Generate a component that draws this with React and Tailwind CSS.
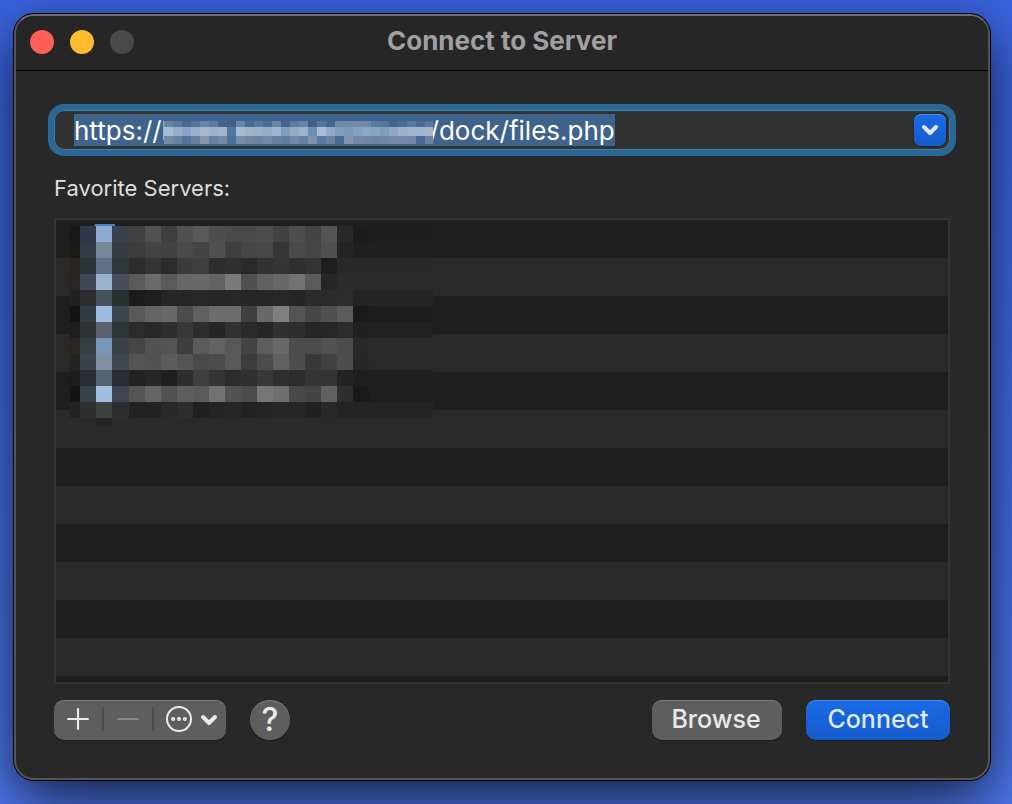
import { ChevronDown, Ellipsis, Minus, Plus } from 'lucide-react'

const CELL = 16

// greyscale levels, one row per strip of the redacted list, starting at the text column
const LIST_GREYS = [
  '42 52 3e 50 58 4e 4a 4a 4c 42 4e 44 54 28 1b 1d',
  '3c 44 42 4a 44 50 3e 46 48 36 4a 46 50 24 1e 1f',
  '2c 34 2b 3b 3e 2d 2f 29 32 34 2f 33 1e 28 28 28',
  '5a 6a 5a 68 68 62 7a 50 60 68 72 5a 26 2a 2a 2a',
  '1b 1e 26 26 28 26 27 26 26 28 25 2a 2a 2b 24 24',
  '58 64 68 4c 60 6c 6c 40 68 80 54 46 50 5c 1a 1d',
  '2b 28 2e 38 2d 25 31 2a 26 30 2e 26 27 2c 20 22',
  '46 52 54 3d 5a 62 58 44 5e 68 4c 4c 52 4c 27 2a',
  '54 52 5c 54 4a 4c 58 3c 4c 60 4e 38 42 4c 26 29',
  '22 26 1f 2e 3e 34 2c 2f 38 2f 2c 34 34 23 1f 1f',
  '54 64 52 5e 5a 72 52 4c 76 6e 48 44 60 2e 1a 1e',
  '22 22 28 2d 20 24 26 22 24 26 26 21 28 24 24 24',
  '2a 2a 2a 29 2a 2a 29 2a 2a 2a 2a 2a 29 2a 2a 2a',
].map((row) => row.split(' ').map((v) => `#${v}${v}${v}`))

// edge, icon left, icon, icon right
const LIST_ICONS = [
  ['#1a1816', '#30374a', '#8daad0', '#384150'],
  ['#1c1a17', '#353a46', '#768797', '#363d41'],
  ['#282522', '#2d3338', '#5d7088', '#30373b'],
  ['#292624', '#3f4656', '#9ab2d0', '#464e5c'],
  ['#212121', '#2c2c30', '#47525c', '#292e2e'],
  ['#151413', '#303b46', '#9dbbe0', '#3b4651'],
  ['#1e1e1d', '#2e3235', '#5b616d', '#2f3437'],
  ['#292624', '#373d45', '#7894b6', '#394149'],
  ['#252320', '#3b4249', '#818fa5', '#414550'],
  ['#1d1c1b', '#282b30', '#536370', '#292c32'],
  ['#141413', '#35414b', '#a0bede', '#3f4553'],
  ['#222222', '#2c2f2e', '#3f4241', '#2b2e2d'],
  ['#2b2b2b', '#292929', '#252525', '#2a2a2a'],
]

const URL_CELLS = [
  '6a84a5 5a7a9f 466a95 55759c 6a84a5 5f7ca2 44648e 3f608c 6a88aa 4a6c95 58789f 4d6d96 6985a5 43658f 5a7a9f 6a84a5 3e628c 56769c 446690 7089aa 7289aa 7289aa 6f89a9 5a7a9f 56769c 44668f 4c6d96 5a789e 4b6b94 5a789e',
  'a9bbd2 96adc8 8ba4c3 9bb0ca a6b8d0 9fb2cb a3b5cd 4f779f a9bad1 a0b3cc 9db1ca 98adc8 a0b4cd 7f9dc0 95abc6 9fb3cb 6d90b7 adbdd3 93aac6 7f9dbe 7d99bb 85a1c1 8da6c4 87a2c2 7d9dc0 8fa7c4 9bb0c9 9fb3cc a0b4cd a3b5cd',
  '7389a7 6882a3 54759b 66809f 8795ae 6882a3 7489a6 4c6f97 7a8da9 6e85a4 6c84a3 7288a6 66809f 5f7c9f 7389a7 66809f 7d90ac 5b799e 6c84a4 47698f 8093ae 7288a6 6f86a5 6c84a4 6f86a5 7389a7 7389a7 6f86a5 48698f 6b83a3',
].map((row) => row.split(' '))

function ListMosaic() {
  return (
    <svg
      className="absolute left-[14px] top-1"
      width="363"
      height="202"
      shapeRendering="crispEdges"
      aria-hidden="true"
    >
      <path d="M25 0h20v2H24z" fill="#4a7fb5" />
      {LIST_GREYS.map((row, r) => {
        const y = 2 + r * CELL
        const h = r === 12 ? 8 : CELL
        return (
          <g key={r}>
            {LIST_ICONS[r].map((fill, c) => (
              <rect key={c} x={c === 0 ? 0 : 10 + (c - 1) * CELL} y={y} width={CELL + 1} height={h} fill={fill} />
            ))}
            {row.map((fill, c) => (
              <rect key={c} x={59 + c * CELL} y={y} width={c === 15 ? 65 : CELL} height={h} fill={fill} />
            ))}
          </g>
        )
      })}
    </svg>
  )
}

function UrlMosaic() {
  const rows = [
    { y: 0, h: 6 },
    { y: 6, h: 9 },
    { y: 15, h: 8 },
  ]
  return (
    <svg
      className="absolute left-[90px] top-[7px]"
      width="269"
      height="23"
      shapeRendering="crispEdges"
      aria-hidden="true"
    >
      {rows.map(({ y, h }, r) =>
        URL_CELLS[r].map((fill, c) => (
          <rect key={`${r}-${c}`} x={c * 9} y={y} width="9" height={h} fill={`#${fill}`} />
        ))
      )}
    </svg>
  )
}

function TitleBar() {
  return (
    <header className="grid h-[55px] grid-cols-[1fr_auto_1fr] items-center border-b border-black bg-[#262626] px-[14px] pb-[2px]">
      <div className="flex gap-4">
        <button type="button" aria-label="Close" className="size-6 rounded-full bg-[#ff5f57]" />
        <button type="button" aria-label="Minimize" className="size-6 rounded-full bg-[#febc2e]" />
        <button type="button" aria-label="Zoom" disabled className="size-6 rounded-full bg-[#4a4a4a]" />
      </div>
      <h1 className="pb-[2px] text-[26px] font-bold leading-8 text-[#a0a0a0]">Connect to Server</h1>
    </header>
  )
}

function AddressField() {
  return (
    <div className="-mx-[6px] flex h-[52px] items-center rounded-2xl border-[6px] border-[#2a6794] bg-[#323232] pl-5 pr-1 shadow-[inset_0_0_0_1px_#3d7fad]">
      <div className="relative flex min-w-0">
        <input
          type="text"
          aria-label="Server Address"
          defaultValue={`https://l${'\u00a0'.repeat(34)}\u2002/dock/files.php`}
          spellCheck={false}
          className="h-8 bg-[#3f638b] text-[26px] text-white outline-none [field-sizing:content]"
        />
        <UrlMosaic />
      </div>
      <button
        type="button"
        aria-label="Recent servers"
        className="ml-auto flex size-8 shrink-0 items-center justify-center rounded-[7px] bg-linear-to-b from-[#1a6be6] to-[#155bcb] text-[#dfe9fb] shadow-[inset_0_1px_0_#4a8bee,0_0_2px_#111]"
      >
        <ChevronDown size={24} strokeWidth={4} />
      </button>
    </div>
  )
}

function Toolbar() {
  return (
    <footer className="mt-4 flex items-center">
      <div className="flex h-10 items-center rounded-[10px] bg-[#5e5e5e] pb-[2px] text-[#eaeaea] shadow-[inset_0_1px_0_#7a7a7a,0_1px_1px_#1a1a1a]">
        <button type="button" aria-label="Add" className="flex h-full w-12 items-center justify-center">
          <Plus size={34} strokeWidth={1.5} />
        </button>
        <span className="h-6 w-[2px] bg-[#4c4c4c]" />
        <button
          type="button"
          aria-label="Remove"
          disabled
          className="flex h-full w-12 items-center justify-center text-[#8a8a8a]"
        >
          <Minus size={34} strokeWidth={1.5} />
        </button>
        <span className="h-6 w-[2px] bg-[#4c4c4c]" />
        <button type="button" aria-label="More actions" className="flex h-full w-[72px] items-center gap-[5px] pl-3">
          <span className="flex size-[26px] items-center justify-center rounded-full border-2 border-[#eaeaea]">
            <Ellipsis size={20} strokeWidth={3} />
          </span>
          <ChevronDown size={24} strokeWidth={4} className="mt-[2px]" />
        </button>
      </div>
      <button
        type="button"
        aria-label="Help"
        className="ml-6 size-10 rounded-full bg-[#5e5e5e] text-[32px] font-medium leading-10 text-[#eaeaea] shadow-[inset_0_1px_0_#7a7a7a,0_1px_1px_#1a1a1a]"
      >
        ?
      </button>
      <button
        type="button"
        className="ml-auto h-10 w-[130px] rounded-[10px] bg-[#5e5e5e] pb-[2px] pr-[2px] text-[25px] font-medium leading-9 text-[#eaeaea] shadow-[inset_0_1px_0_#7a7a7a,0_1px_1px_#1a1a1a]"
      >
        Browse
      </button>
      <button
        type="button"
        className="ml-6 h-10 w-36 rounded-[10px] bg-linear-to-b from-[#1a6be6] to-[#155bcb] pb-[2px] text-[25px] font-medium leading-9 text-[#dfe9fb] shadow-[inset_0_1px_0_#4a8bee,0_1px_1px_#1a1a1a]"
      >
        Connect
      </button>
    </footer>
  )
}

export default function App() {
  return (
    <div className="flex min-h-screen overflow-hidden bg-linear-to-b from-[#3a63e0] to-[#4e78f0] pb-6 pl-[14px] pr-[22px] pt-[14px] font-['Inter',sans-serif]">
      <main className="flex flex-1 flex-col overflow-hidden rounded-[20px] border-2 border-[#555555] border-t-[#6e6e6e] bg-[#282828] shadow-[0_0_0_1px_#000,0_20px_60px_rgba(0,0,0,0.75)]">
        <TitleBar />
        <div className="flex flex-1 flex-col px-[38px] pb-[38px] pt-[33px]">
          <AddressField />
          <h2 id="favorites" className="mt-4 text-[22px] leading-8 text-[#dedede]">
            Favorite Servers:
          </h2>
          <section
            aria-labelledby="favorites"
            className="relative mt-[14px] min-h-[220px] flex-1 overflow-hidden border-2 border-[#333333] bg-[repeating-linear-gradient(#1e1e1e_0_38px,#292929_38px_76px)]"
          >
            <ListMosaic />
          </section>
          <Toolbar />
        </div>
      </main>
    </div>
  )
}
